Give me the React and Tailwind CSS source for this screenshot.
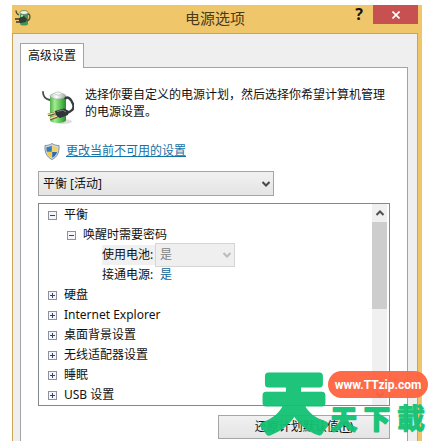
import React, { useState } from 'react';

const plans = ['平衡 [活动]', '高性能', '节能'];

const groups = [
    { id: 'disk', label: '硬盘' },
    { id: 'ie', label: 'Internet Explorer' },
    { id: 'desktop', label: '桌面背景设置' },
    { id: 'wifi', label: '无线适配器设置' },
    { id: 'sleep', label: '睡眠' },
    { id: 'usb', label: 'USB 设置' },
];

const Chevron = ({ className }) => (
    <svg viewBox="0 0 8 6" className={className} fill="none" stroke="currentColor" strokeWidth="2" aria-hidden="true">
        <path d="M0.5 1 L4 4.5 L7.5 1" />
    </svg>
);

// Green battery with a power cable looped round it
const BatteryIcon = ({ className }) => (
    <svg viewBox="0 0 32 34" className={className} aria-hidden="true">
        <defs>
            <linearGradient id="cell" x1="0" x2="1" y1="0" y2="0">
                <stop offset="0" stopColor="#4fb24c" />
                <stop offset="0.3" stopColor="#a5ea92" />
                <stop offset="0.65" stopColor="#5cc653" />
                <stop offset="1" stopColor="#2b8a33" />
            </linearGradient>
            <linearGradient id="cap" x1="0" x2="1" y1="0" y2="0">
                <stop offset="0" stopColor="#b4c0b4" />
                <stop offset="0.4" stopColor="#ffffff" />
                <stop offset="1" stopColor="#9aa69a" />
            </linearGradient>
        </defs>
        <ellipse cx="21" cy="30.5" rx="9" ry="2.5" fill="#dcdfdc" />
        <path d="M1 1 C1 5 3 8 8 9" fill="none" stroke="#444d54" strokeWidth="1.8" strokeLinecap="round" />
        <path d="M8 5 V29 C8 33 24 33 24 29 V5 Z" fill="url(#cell)" />
        <ellipse cx="16" cy="5" rx="8" ry="3" fill="url(#cap)" stroke="#93a293" strokeWidth="0.5" />
        <ellipse cx="16" cy="2.5" rx="3.5" ry="1.6" fill="#f2f5f2" stroke="#a3ada3" strokeWidth="0.5" />
        <path d="M23 8 C25 5 29 7 31 13 C33 18 29 21 24 22" fill="none" stroke="#363c42" strokeWidth="2.4" />
        <path d="M13 20 L22 17.5 L27 20 L26 24 L18 27 L14 25 Z" fill="#30353a" />
        <path d="M15 20.5 L21 19 L24 21" fill="none" stroke="#7b858b" strokeWidth="1" />
        <path d="M13 22 L6 24 M15 25.5 L8 28" stroke="#5d4c26" strokeWidth="2.6" />
        <path d="M13 21.6 L6 23.6 M15 25 L8 27.5" stroke="#f0dc9c" strokeWidth="1.4" />
    </svg>
);

const TitleIcon = ({ className }) => (
    <svg viewBox="0 0 16 16" className={className} aria-hidden="true">
        <path d="M5 3 V14 C5 16 13 16 13 14 V3 Z" fill="#3f9950" />
        <path d="M7 5 V9" stroke="#a6dfaa" strokeWidth="2" />
        <ellipse cx="9" cy="2.5" rx="4" ry="2" fill="#f0f5e8" stroke="#57735a" strokeWidth="0.7" />
        <path d="M1 0.5 C1 3 2 4 4 5 M13 4 C16 4 15.5 10 12 11" fill="none" stroke="#46533f" strokeWidth="1.3" />
        <path d="M4 8 L9 6 L12 9 L11 12 L6 13 L4 11 Z" fill="#333c38" />
        <path d="M0 9 H5 M1 12 H6" stroke="#3a3a2c" strokeWidth="1.4" />
    </svg>
);

const ShieldIcon = ({ className }) => (
    <svg viewBox="0 0 16 17" className={className} aria-hidden="true">
        <path d="M8 0.5 C10 2 12.5 2.5 15 2.5 C15.5 9 13.5 14 8 16.5 C2.5 14 0.5 9 1 2.5 C3.5 2.5 6 2 8 0.5 Z" fill="#d3dade" stroke="#76848f" strokeWidth="0.9" />
        <path d="M7.8 2.5 C6 3.5 4.5 4 2.5 4 C2.3 6 2.5 7 2.8 8.7 H7.8 Z" fill="#3a7ab6" />
        <path d="M8.2 2.5 C10 3.5 11.5 4 13.5 4 C13.7 6 13.5 7 13.2 8.7 H8.2 Z" fill="#f0d35c" />
        <path d="M2.9 9 H7.8 V14.7 C5.2 13.5 3.6 11.5 2.9 9 Z" fill="#efcb48" />
        <path d="M13.1 9 H8.2 V14.7 C10.8 13.5 12.4 11.5 13.1 9 Z" fill="#2f6aaa" />
    </svg>
);

const Expander = ({ open, label, onClick }) => (
    <button
        type="button"
        aria-label={label}
        aria-expanded={open}
        onClick={onClick}
        className="w-[9px] h-[9px] shrink-0 border border-[#8c919c] bg-[#f4f6fa] text-[#34427a]"
    >
        <svg viewBox="0 0 7 7" className="block w-full h-full" stroke="currentColor" shapeRendering="crispEdges">
            <path d={open ? 'M1 3.5 H6' : 'M1 3.5 H6 M3.5 1 V6'} />
        </svg>
    </button>
);

const SettingsTree = () => {
    const [expanded, setExpanded] = useState({ balanced: true, wake: true });
    const toggle = (id) => setExpanded((prev) => ({ ...prev, [id]: !prev[id] }));

    return (
        <div className="flex mt-[7px] border border-[#828790] bg-white">
            <ul className="flex-1 min-w-0 pt-px pl-[9px] leading-5">
                <li>
                    <div className="flex items-center gap-[7px] h-5">
                        <Expander open={expanded.balanced} label="平衡" onClick={() => toggle('balanced')} />
                        <span>平衡</span>
                    </div>
                    {expanded.balanced && (
                        <ul className="pl-[19px]">
                            <li>
                                <div className="flex items-center gap-[7px] h-5">
                                    <Expander open={expanded.wake} label="唤醒时需要密码" onClick={() => toggle('wake')} />
                                    <span>唤醒时需要密码</span>
                                </div>
                                {expanded.wake && (
                                    <div className="pl-[35px]">
                                        <div className="flex items-center h-5">
                                            <label htmlFor="battery" className="w-[53px] bg-[#f0f0f0] whitespace-nowrap">使用电池:</label>
                                            <div className="relative">
                                                <select
                                                    id="battery"
                                                    disabled
                                                    className="block appearance-none w-20 h-6 pl-1 border border-[#d5d5d5] bg-[#efefef] text-[#838383] opacity-100"
                                                >
                                                    <option>是</option>
                                                </select>
                                                <Chevron className="absolute right-1 top-[9px] w-2 h-1.5 text-[#bcbcbc]" />
                                            </div>
                                        </div>
                                        <div className="flex items-center h-5">
                                            <span className="w-[58px] whitespace-nowrap">接通电源:</span>
                                            <a href="#plugged-in" className="text-[#0d6596]">是</a>
                                        </div>
                                    </div>
                                )}
                            </li>
                        </ul>
                    )}
                </li>
                {groups.map((group) => (
                    <li key={group.id} className="flex items-center gap-[7px] h-5">
                        <Expander open={!!expanded[group.id]} label={group.label} onClick={() => toggle(group.id)} />
                        <span>{group.label}</span>
                    </li>
                ))}
            </ul>
            <div className="flex flex-col w-[15px] mr-0.5 bg-[#f0f0f0]">
                <button type="button" aria-label="向上滚动" className="flex items-center justify-center h-[18px]">
                    <Chevron className="w-2 h-1.5 rotate-180 text-[#505050]" />
                </button>
                <div className="h-[87px] bg-[#cdcdcd]" />
                <button type="button" aria-label="向下滚动" className="flex items-center justify-center h-5 mt-auto">
                    <Chevron className="w-2 h-1.5 text-[#505050]" />
                </button>
            </div>
        </div>
    );
};

// Site logo laid over the bottom right corner
const Watermark = () => (
    <svg
        viewBox="0 0 172 76"
        className="absolute right-1 bottom-0 w-[172px] h-[76px] pointer-events-none font-bold opacity-95"
        textAnchor="middle"
        strokeLinejoin="round"
    >
        <g fill="#12c172" stroke="#12c172">
            <text x="38" y="61" strokeWidth="7" className="text-[64px]">天</text>
            <text x="88" y="64" strokeWidth="2" className="text-[26px]">天</text>
            <text x="121" y="64" strokeWidth="2" className="text-[26px]">下</text>
            <text x="155" y="64" strokeWidth="1" className="text-[28px]">載</text>
        </g>
        <rect x="72" y="6" width="100" height="27" rx="13.5" fill="#ff6340" />
        <text x="122" y="24" fill="#fff" className="text-xs font-['Roboto',sans-serif]">www.TTzip.com</text>
    </svg>
);

const App = () => {
    const [plan, setPlan] = useState(plans[0]);

    return (
        <div className="relative flex min-h-screen overflow-hidden bg-white pt-[5px] pl-3 pr-2.5 text-xs text-[#111] font-['Noto_Sans','Noto_Sans_CJK_SC',sans-serif]">
            <main className="flex flex-col flex-1 min-w-0 bg-[#efc76a]">
                <header className="relative flex justify-between h-7 pl-[3px] pr-1">
                    <TitleIcon className="w-4 h-4 mt-[5px]" />
                    <h1 className="absolute inset-x-0 pr-1 text-center text-[15px] leading-[27px] text-[#4b3a18] pointer-events-none">电源选项</h1>
                    <div className="flex items-start">
                        <button type="button" aria-label="帮助" className="w-7 h-[19px] text-base leading-[19px] font-bold">?</button>
                        <button type="button" aria-label="关闭" className="flex items-center justify-center w-[45px] h-[19px] bg-[#c75050] text-white">
                            <svg viewBox="0 0 8 8" className="w-2 h-2" stroke="currentColor" strokeWidth="1.6">
                                <path d="M0.5 0.5 L7.5 7.5 M7.5 0.5 L0.5 7.5" />
                            </svg>
                        </button>
                    </div>
                </header>

                <div className="flex flex-col flex-1 mr-1 border border-b-0 border-[#c9a558] bg-[#efefef] pt-[9px] pl-[7px] pr-[9px]">
                    <div role="tablist" className="flex">
                        <button
                            type="button"
                            role="tab"
                            aria-selected="true"
                            className="relative z-10 h-[25px] -mb-px px-[7px] border border-b-0 border-[#a0a4a8] bg-white"
                        >
                            高级设置
                        </button>
                    </div>

                    <section className="flex-1 border border-b-0 border-[#a0a4a8] bg-white px-[17px] pt-[18px]">
                        <div className="flex gap-[11px] pl-1">
                            <BatteryIcon className="w-8 h-[34px] mt-[5px] shrink-0" />
                            <p className="leading-[17px]">选择你要自定义的电源计划，然后选择你希望计算机管理的电源设置。</p>
                        </div>
                        <div className="flex items-center gap-1.5 h-[30px] mt-[11px] pl-1.5">
                            <ShieldIcon className="w-4 h-[17px]" />
                            <a href="#unavailable" className="text-[#1573a5] underline">更改当前不可用的设置</a>
                        </div>

                        <div className="relative w-[236px] mt-[5px]">
                            <select
                                aria-label="电源计划"
                                value={plan}
                                onChange={(e) => setPlan(e.target.value)}
                                className="block appearance-none w-full h-[25px] pl-1 border border-[#a5a5a5] bg-linear-to-b from-[#f1f1f1] to-[#e4e4e4]"
                            >
                                {plans.map((name) => (
                                    <option key={name}>{name}</option>
                                ))}
                            </select>
                            <Chevron className="absolute right-1 top-[10px] w-2 h-1.5 text-[#484848] pointer-events-none" />
                        </div>

                        <SettingsTree />

                        <div className="flex justify-end mt-[9px]">
                            <button type="button" className="w-[172px] h-6 border border-[#a5a5a5] bg-linear-to-b from-[#f1f1f1] to-[#e4e4e4]">
                                还原计划默认值(<u>R</u>)
                            </button>
                        </div>
                    </section>
                </div>
            </main>
            <Watermark />
        </div>
    );
};

export default App;
